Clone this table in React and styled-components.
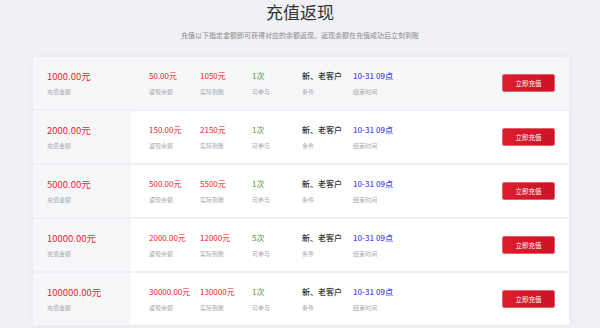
import React from 'react'
import styled, { createGlobalStyle } from 'styled-components'

const rows = [
  { amount: '1000.00元', back: '50.00元', real: '1050元', times: '1次', active: true },
  { amount: '2000.00元', back: '150.00元', real: '2150元', times: '1次' },
  { amount: '5000.00元', back: '500.00元', real: '5500元', times: '1次' },
  { amount: '10000.00元', back: '2000.00元', real: '12000元', times: '5次' },
  { amount: '100000.00元', back: '30000.00元', real: '130000元', times: '1次' },
]

const App = () => {
  return (
    <Page>
      <GlobalStyle />
      <Title>充值返现</Title>
      <Subtitle>充值以下指定金额即可获得对应的余额返现，返现余额在充值成功后立刻到账</Subtitle>
      <Card>
        {rows.map((r) => (
          <Row key={r.amount} active={r.active}>
            <LeftCell>
              <Amount>{r.amount}</Amount>
              <Label>充值金额</Label>
            </LeftCell>
            <Cells>
              <Cell w="51px">
                <Value>{r.back}</Value>
                <Label>返现余额</Label>
              </Cell>
              <Cell w="52px">
                <Value>{r.real}</Value>
                <Label>实际到账</Label>
              </Cell>
              <Cell w="50px">
                <Value color="#4c9a3a">{r.times}</Value>
                <Label>可参与</Label>
              </Cell>
              <Cell w="51px">
                <Value color="#333" weight={500}>新、老客户</Value>
                <Label>条件</Label>
              </Cell>
              <Cell w="100px">
                <Value color="#4c4af2" weight={500}>10-31 09点</Value>
                <Label>结束时间</Label>
              </Cell>
              <Button>立即充值</Button>
            </Cells>
          </Row>
        ))}
      </Card>
    </Page>
  )
}

export default App

const GlobalStyle = createGlobalStyle`
body {
  margin: 0;
  background: #f0f1f5;
  font-family: "Noto Sans CJK SC", "Noto Sans", sans-serif;
}
`

const Page = styled.div`
width: 600px;
height: 328px;
overflow: hidden;
display: flex;
flex-direction: column;
`

const Title = styled.h1`
margin: 0;
font-size: 17px;
line-height: 24px;
font-weight: 400;
color: #333;
text-align: center;
`

const Subtitle = styled.div`
margin-top: 6px;
font-size: 7px;
line-height: 10px;
color: #888;
text-align: center;
`

const Card = styled.div`
margin: 17px 0 0 33px;
width: 536px;
background: #eef0f3;
display: flex;
flex-direction: column;
gap: 2px;
box-shadow: 0 0 8px rgba(0, 0, 0, 0.04);
`

const Row = styled.div`
height: 52px;
display: flex;
background: ${({ active }) => (active ? '#f6f7f9' : '#fff')};
`

const LeftCell = styled.div`
width: 98px;
padding-left: 14px;
box-sizing: border-box;
background: #f6f7f9;
display: flex;
flex-direction: column;
justify-content: center;
`

const Cells = styled.div`
flex: 1;
display: flex;
align-items: center;
padding: 0 14px 0 18px;
`

const Cell = styled.div`
width: ${({ w }) => w};
display: flex;
flex-direction: column;
justify-content: center;
height: 100%;
`

const Amount = styled.div`
font-size: 9.5px;
line-height: 14px;
color: #f5222d;
margin-top: -1px;
`

const Value = styled.div`
font-size: 8px;
line-height: 14px;
color: ${({ color }) => color || '#f5222d'};
font-weight: ${({ weight }) => weight || 400};
margin-top: -1px;
`

const Label = styled.div`
font-size: 6px;
line-height: 9px;
color: #a5a8ad;
margin-top: 4px;
`

const Button = styled.div`
margin-left: auto;
width: 53px;
height: 18px;
box-sizing: border-box;
border: 1px solid #e8606c;
border-radius: 2px;
background: linear-gradient(90deg, #dc1e2e, #cc1226);
color: #fff;
font-size: 6.5px;
display: flex;
align-items: center;
justify-content: center;
`
